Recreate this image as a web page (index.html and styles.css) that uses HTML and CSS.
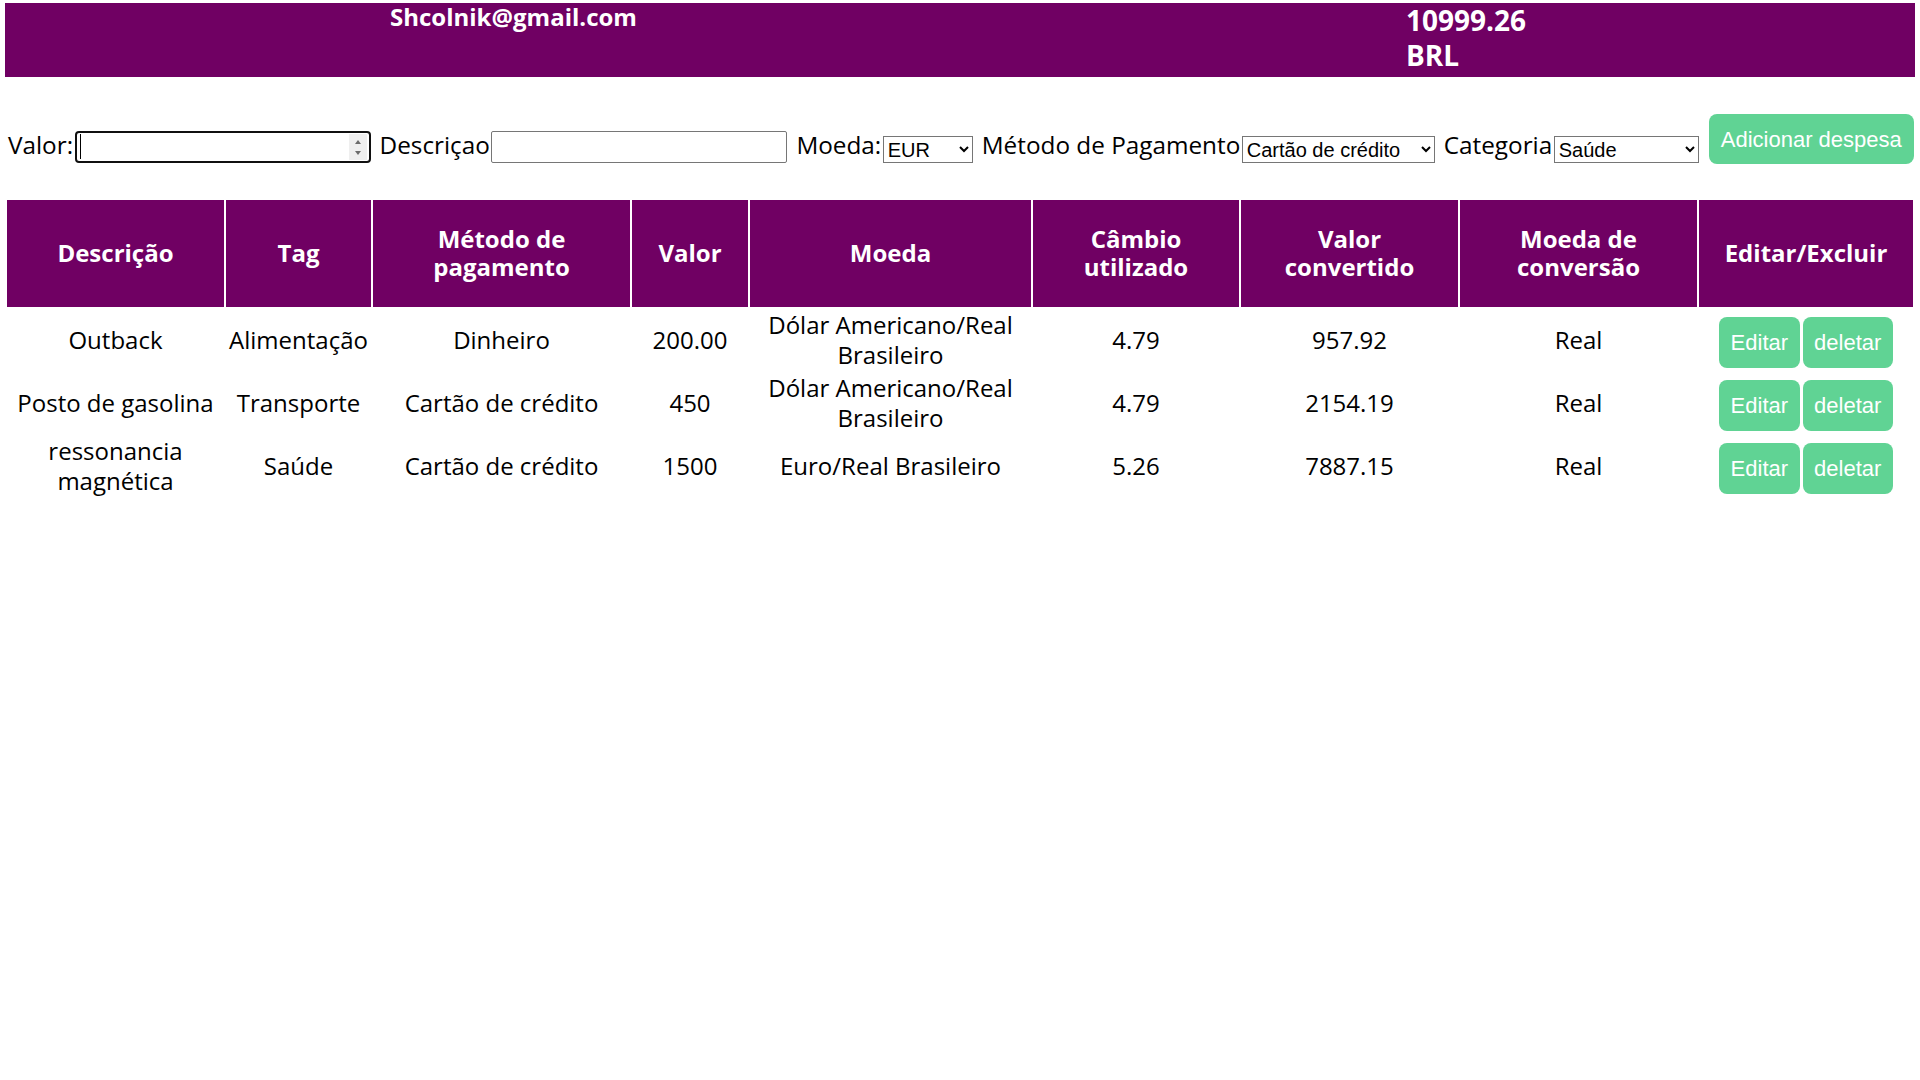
FILE: index.html
```html
<!DOCTYPE html>
<html lang="pt-BR">
<head>
<meta charset="utf-8">
<title>Carteira de despesas</title>
<link rel="stylesheet" href="styles.css">
</head>
<body>
<div class="app">
  <header class="top">
    <p class="email">Shcolnik@gmail.com</p>
    <p class="total"><span>10999.26</span><span>BRL</span></p>
  </header>

  <form class="expense-form">
    <label class="field">
      <span class="field-label">Valor:</span>
      <span class="num-wrap">
        <input type="number" class="ctl text-input num-input">
        <span class="caret"></span>
        <span class="spinner">
          <svg width="18" height="26" viewBox="0 0 18 26"><path d="M6 10 L12 10 L9 6 Z" fill="#6b6b6b"/><path d="M6 17 L12 17 L9 21 Z" fill="#6b6b6b"/></svg>
        </span>
      </span>
    </label>
    <label class="field">
      <span class="field-label">Descriçao</span>
      <input type="text" class="ctl text-input">
    </label>
    <label class="field">
      <span class="field-label">Moeda:</span>
      <select class="ctl select sel-moeda">
        <option>USD</option>
        <option selected>EUR</option>
      </select>
    </label>
    <label class="field">
      <span class="field-label">Método de Pagamento</span>
      <select class="ctl select sel-metodo">
        <option>Dinheiro</option>
        <option selected>Cartão de crédito</option>
        <option>Cartão de débito</option>
      </select>
    </label>
    <label class="field">
      <span class="field-label">Categoria</span>
      <select class="ctl select sel-cat">
        <option>Alimentação</option>
        <option>Lazer</option>
        <option>Trabalho</option>
        <option>Transporte</option>
        <option selected>Saúde</option>
      </select>
    </label>
    <button type="button" class="add-btn">Adicionar despesa</button>
  </form>

  <table class="expenses">
    <colgroup>
      <col class="c-desc"><col class="c-tag"><col class="c-metodo"><col class="c-valor"><col class="c-moeda"><col class="c-cambio"><col class="c-conv"><col class="c-moedaconv"><col class="c-acoes">
    </colgroup>
    <thead>
      <tr>
        <th>Descrição</th>
        <th>Tag</th>
        <th>Método de pagamento</th>
        <th>Valor</th>
        <th>Moeda</th>
        <th>Câmbio utilizado</th>
        <th>Valor convertido</th>
        <th>Moeda de conversão</th>
        <th>Editar/Excluir</th>
      </tr>
    </thead>
    <tbody>
      <tr>
        <td>Outback</td>
        <td>Alimentação</td>
        <td>Dinheiro</td>
        <td>200.00</td>
        <td>Dólar Americano/Real Brasileiro</td>
        <td>4.79</td>
        <td>957.92</td>
        <td>Real</td>
        <td class="actions"><div class="btn-row"><button type="button" class="act-btn">Editar</button><button type="button" class="act-btn">deletar</button></div></td>
      </tr>
      <tr>
        <td>Posto de gasolina</td>
        <td>Transporte</td>
        <td>Cartão de crédito</td>
        <td>450</td>
        <td>Dólar Americano/Real Brasileiro</td>
        <td>4.79</td>
        <td>2154.19</td>
        <td>Real</td>
        <td class="actions"><div class="btn-row"><button type="button" class="act-btn">Editar</button><button type="button" class="act-btn">deletar</button></div></td>
      </tr>
      <tr>
        <td>ressonancia magnética</td>
        <td>Saúde</td>
        <td>Cartão de crédito</td>
        <td>1500</td>
        <td>Euro/Real Brasileiro</td>
        <td>5.26</td>
        <td>7887.15</td>
        <td>Real</td>
        <td class="actions"><div class="btn-row"><button type="button" class="act-btn">Editar</button><button type="button" class="act-btn">deletar</button></div></td>
      </tr>
    </tbody>
  </table>
</div>
</body>
</html>
```

FILE: styles.css
```css
* { box-sizing: border-box; }

body {
  margin: 0;
  font-family: "Open Sans", "Noto Sans", sans-serif;
  color: #000;
  background: #fff;
}

.app { padding: 3px 5px; }

/* Header band */
.top {
  background: #700063;
  color: #fff;
  height: 74px;
  display: flex;
  align-items: flex-start;
  padding-left: 385px;
}
.email {
  margin: 0;
  width: 1016px;
  font-size: 24px;
  font-weight: 700;
  line-height: 28px;
}
.total {
  margin: 0;
  padding-top: 0;
  font-size: 28px;
  font-weight: 700;
  line-height: 35px;
  display: flex;
  flex-direction: column;
}

/* Form */
.expense-form {
  display: flex;
  align-items: flex-end;
  gap: 9px;
  margin-top: 37px;
  padding-left: 3px;
  height: 50px;
  white-space: nowrap;
}
.expense-form > * { flex-shrink: 0; }
.field {
  display: flex;
  align-items: flex-end;
  margin-bottom: 1px;
}
.field-label {
  font-size: 24.3px;
  line-height: 28px;
  padding-bottom: 4px;
  margin-right: 1.5px;
  white-space: nowrap;
}
.ctl {
  font-family: "Liberation Sans", Arial, sans-serif;
  font-size: 20px;
  margin: 0;
  color: #000;
  flex-shrink: 0;
}
.text-input {
  width: 296px;
  height: 32px;
  border: 1px solid #767676;
  border-radius: 2px;
  padding: 1px 2px;
  background: #fff;
}
.num-wrap {
  position: relative;
  display: block;
  flex-shrink: 0;
}
.num-input {
  display: block;
  border: 2px solid #101010;
  border-radius: 4px;
  -moz-appearance: textfield;
}
.num-input::-webkit-inner-spin-button,
.num-input::-webkit-outer-spin-button {
  -webkit-appearance: none;
  margin: 0;
}
.caret {
  position: absolute;
  left: 5px;
  top: 3px;
  width: 1px;
  height: 25px;
  background: #000;
}
.spinner {
  position: absolute;
  right: 4px;
  top: 3px;
  width: 18px;
  height: 26px;
  background: #efefef;
  display: flex;
}
.select {
  height: 27px;
  border: 1px solid #767676;
  border-radius: 0;
  background: #fff;
}
.sel-moeda { width: 90px; }
.sel-metodo { width: 193px; }
.sel-cat { width: 145px; }

.add-btn {
  height: 50px;
  padding: 0 12px;
  margin-left: 1px;
  border: none;
  border-radius: 8px;
  background: #60d394;
  color: #fff;
  font-family: "Liberation Sans", Arial, sans-serif;
  font-size: 22px;
  line-height: 25px;
  white-space: nowrap;
}

/* Table */
.expenses {
  margin-top: 34px;
  width: 1910px;
  table-layout: fixed;
  border-collapse: separate;
  border-spacing: 2px;
  font-size: 24px;
}
.c-desc { width: 217px; }
.c-tag { width: 145px; }
.c-metodo { width: 257px; }
.c-valor { width: 116px; }
.c-moeda { width: 281px; }
.c-cambio { width: 206px; }
.c-conv { width: 217px; }
.c-moedaconv { width: 237px; }
.c-acoes { width: 214px; }

.expenses th {
  background: #700063;
  color: #fff;
  font-weight: 700;
  line-height: 28px;
  height: 107px;
  padding: 0 12px 2px;
  text-align: center;
}
.expenses td {
  text-align: center;
  line-height: 30px;
  padding: 0 1px;
  height: 61px;
}
.expenses td.actions { padding: 8px 1px 2px; }
.btn-row {
  display: flex;
  justify-content: center;
  gap: 3px;
}
.act-btn {
  height: 51px;
  padding: 0 11.5px;
  border: none;
  border-radius: 8px;
  background: #60d394;
  color: #fff;
  font-family: "Liberation Sans", Arial, sans-serif;
  font-size: 22px;
  line-height: 25px;
}
```
